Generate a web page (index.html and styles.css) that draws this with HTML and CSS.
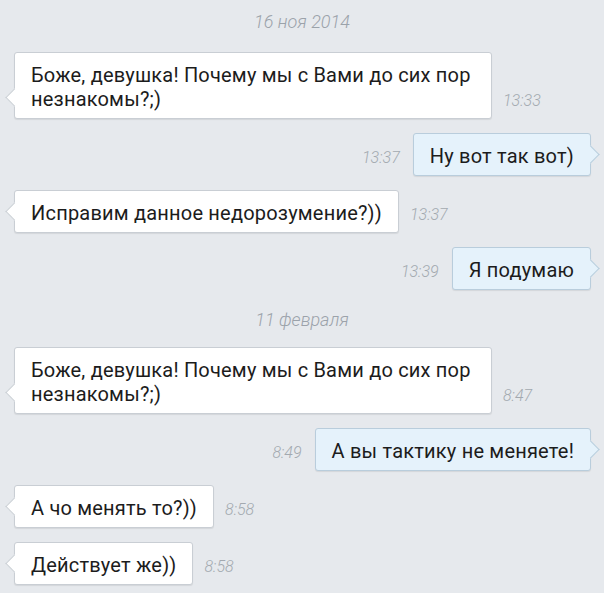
FILE: index.html
```html
<!DOCTYPE html>
<html lang="ru">
<head>
    <meta charset="UTF-8">
    <title>Диалог</title>
    <link rel="stylesheet" href="styles.css">
</head>
<body>
    <div class="chat">
        <div class="date first">16 ноя 2014</div>

        <div class="row in">
            <div class="bubble wide">Боже, девушка! Почему мы с Вами до сих пор незнакомы?;)</div>
            <span class="time">13:33</span>
        </div>

        <div class="row out">
            <span class="time">13:37</span>
            <div class="bubble">Ну вот так вот)</div>
        </div>

        <div class="row in">
            <div class="bubble">Исправим данное недорозумение?))</div>
            <span class="time">13:37</span>
        </div>

        <div class="row out">
            <span class="time">13:39</span>
            <div class="bubble">Я подумаю</div>
        </div>

        <div class="date">11 февраля</div>

        <div class="row in">
            <div class="bubble wide">Боже, девушка! Почему мы с Вами до сих пор незнакомы?;)</div>
            <span class="time">8:47</span>
        </div>

        <div class="row out">
            <span class="time">8:49</span>
            <div class="bubble">А вы тактику не меняете!</div>
        </div>

        <div class="row in">
            <div class="bubble">А чо менять то?))</div>
            <span class="time">8:58</span>
        </div>

        <div class="row in">
            <div class="bubble">Действует же))</div>
            <span class="time">8:58</span>
        </div>
    </div>
</body>
</html>
```

FILE: styles.css
```css
/* General */
body {
    margin: 0;
    padding: 0;
    background-color: #e6e9ed;
    font-family: Roboto, 'Noto Sans', sans-serif;
    height: 593px;
    overflow: hidden;
}

.chat {
    display: flex;
    flex-direction: column;
    padding-top: 9px;
}

/* Date separator */
.date {
    height: 26px;
    line-height: 26px;
    margin-top: 17px;
    text-align: center;
    font-size: 18px;
    font-style: italic;
    font-weight: 300;
    color: #9ba2aa;
}

.date.first {
    margin-top: 0;
    margin-bottom: 3px;
}

/* Message rows */
.row {
    display: flex;
    align-items: flex-end;
    margin-top: 14px;
}

.row.in {
    justify-content: flex-start;
    padding-left: 14px;
}

.row.out {
    justify-content: flex-end;
    padding-right: 13px;
}

.bubble {
    position: relative;
    padding: 10px 16px 7px;
    font-size: 20px;
    line-height: 24px;
    letter-spacing: 0.2px;
    color: #1c1c1c;
    background-color: #fff;
    border: 1px solid #c9ced4;
    border-radius: 3px;
    box-shadow: 0 1px 1px rgba(0, 0, 0, 0.08);
}

.bubble.wide {
    box-sizing: border-box;
    width: 478px;
}

/* Tail */
.bubble::before {
    content: '';
    position: absolute;
    bottom: 14px;
    width: 12px;
    height: 12px;
    background-color: inherit;
    transform: rotate(45deg);
}

.in .bubble::before {
    left: -7px;
    border-left: 1px solid #c9ced4;
    border-bottom: 1px solid #c9ced4;
}

.out .bubble {
    background-color: #e5f2fb;
    border-color: #b9cddc;
}

.out .bubble::before {
    right: -7px;
    border-right: 1px solid #b9cddc;
    border-top: 1px solid #b9cddc;
}

/* Time */
.time {
    line-height: 20px;
    padding-bottom: 8px;
    font-size: 16px;
    font-style: italic;
    font-weight: 300;
    color: #a3a9b0;
}

.in .time {
    margin-left: 11px;
}

.out .time {
    margin-right: 13px;
}
```
